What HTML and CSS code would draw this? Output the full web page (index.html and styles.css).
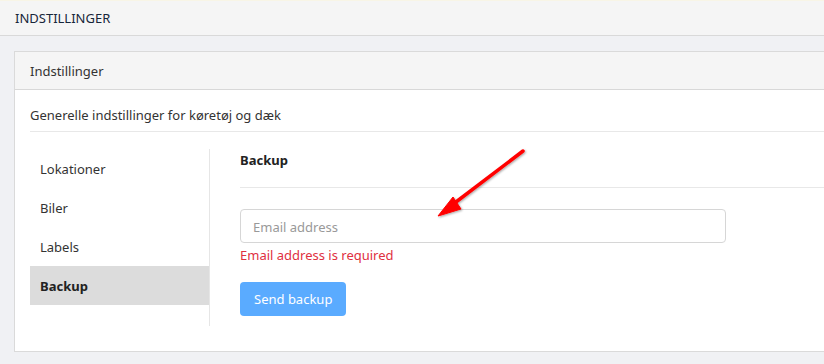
FILE: index.html
```html
<!DOCTYPE html>
<html lang="da">

<head>
    <meta charset="UTF-8">
    <meta name="viewport" content="width=device-width, initial-scale=1.0">
    <title>Indstillinger</title>
    <link rel="stylesheet" href="styles.css">
</head>

<body>
    <header class="top-bar">
        <span class="top-bar-title">INDSTILLINGER</span>
    </header>
    <main class="page">
        <section class="card">
            <div class="card-header">Indstillinger</div>
            <div class="card-body">
                <p class="card-intro">Generelle indstillinger for køretøj og dæk</p>
                <div class="settings">
                    <ul class="settings-nav">
                        <li><a href="#">Lokationer</a></li>
                        <li><a href="#">Biler</a></li>
                        <li><a href="#">Labels</a></li>
                        <li class="active"><a href="#">Backup</a></li>
                    </ul>
                    <div class="settings-content">
                        <h2 class="settings-title">Backup</h2>
                        <form class="backup-form">
                            <input class="form-input" type="email" placeholder="Email address">
                            <div class="form-error">Email address is required</div>
                            <button class="btn-primary" type="button">Send backup</button>
                        </form>
                    </div>
                </div>
            </div>
        </section>
    </main>

    <svg class="annotation-arrow" width="120" height="100" viewBox="0 0 120 100" aria-hidden="true">
        <defs>
            <filter id="arrow-shadow" x="-20%" y="-20%" width="140%" height="140%">
                <feDropShadow dx="1" dy="1" stdDeviation="1.2" flood-color="#000" flood-opacity="0.35" />
            </filter>
        </defs>
        <g filter="url(#arrow-shadow)" fill="#ff0000" stroke="#ff0000">
            <line x1="103" y1="11" x2="32" y2="65" stroke-width="3.5" stroke-linecap="round" />
            <polygon points="18,76 33,57 41,69" stroke-width="1" stroke-linejoin="round" />
        </g>
    </svg>
</body>

</html>
```

FILE: styles.css
```css
body,
body * {
    padding: 0;
    margin: 0;
    box-sizing: border-box;
    font-family: 'Segoe UI', 'Noto Sans', sans-serif;
}

body {
    background-color: #f0f1f4;
    color: #333;
    font-size: 13px;
    overflow: hidden;
    height: 364px;
}

body ul {
    list-style: none;
}

a {
    color: inherit;
    text-decoration: none;
}

.top-bar {
    height: 36px;
    background-color: #f5f5f5;
    border-top: 1px solid #f8f5e6;
    border-bottom: 1px solid #d9d9d9;
    display: flex;
    align-items: center;
    padding-left: 15px;
}

.top-bar-title {
    font-size: 13px;
    color: #17263a;
}

.page {
    padding: 15px 0 0 14px;
}

.card {
    background-color: #fff;
    border: 1px solid #dadada;
    border-right: none;
    height: 301px;
}

.card-header {
    height: 38px;
    background-color: #f5f5f5;
    border-bottom: 1px solid #d8d8d8;
    display: flex;
    align-items: center;
    padding-left: 15px;
    padding-top: 1px;
    color: #333;
}

.card-body {
    padding-left: 15px;
}

.card-intro {
    height: 42px;
    display: flex;
    align-items: center;
    border-bottom: 1px solid #e8e8e8;
    padding-top: 9px;
}

.settings {
    display: grid;
    grid-template-columns: 180px 1fr;
    margin-top: 17px;
}

.settings-nav {
    border-right: 1px solid #e6e6e6;
    padding-bottom: 21px;
}

.settings-nav li a {
    display: flex;
    align-items: center;
    height: 39px;
    padding-left: 10px;
}

.settings-nav li.active a {
    background-color: #dcdcdc;
    font-weight: 700;
    color: #222;
}

.settings-content {
    padding-left: 30px;
}

.settings-title {
    font-size: 13px;
    font-weight: 700;
    color: #222;
    height: 39px;
    border-bottom: 1px solid #e8e8e8;
    padding-top: 1px;
    line-height: 20px;
}

.backup-form {
    padding-top: 21px;
}

.form-input {
    display: block;
    width: 486px;
    height: 34px;
    border: 1px solid #d6d6d6;
    border-radius: 4px;
    padding: 2px 12px 0;
    font-size: 13px;
    color: #333;
    background-color: #fff;
}

.form-input::placeholder {
    color: #999;
}

.form-error {
    color: #e0303f;
    font-size: 13px;
    line-height: 20px;
    margin-top: 2px;
}

.btn-primary {
    margin-top: 17px;
    height: 34px;
    padding: 0 14px;
    border: none;
    border-radius: 4px;
    background-color: #5aabff;
    color: #fff;
    font-size: 13px;
}

/* screenshot annotation */
.annotation-arrow {
    position: absolute;
    left: 420px;
    top: 140px;
}
```
